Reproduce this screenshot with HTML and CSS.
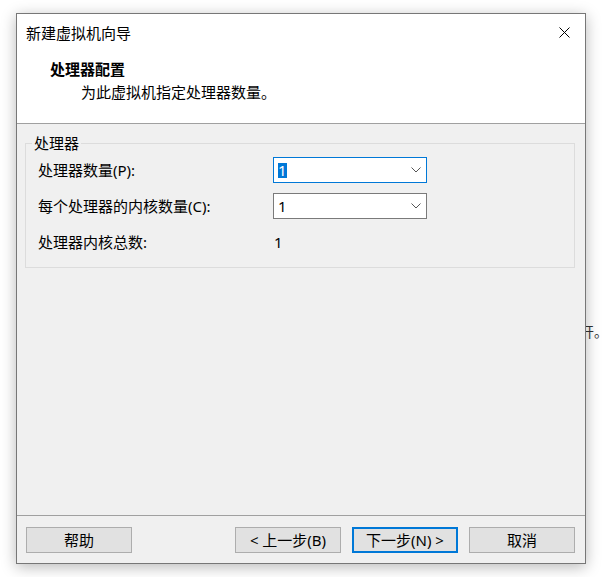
FILE: index.html
```html
<!DOCTYPE html>
<html lang="zh-CN">
<head>
    <meta charset="UTF-8">
    <meta name="viewport" content="width=device-width, initial-scale=1.0">
    <title>新建虚拟机向导</title>
    <link rel="stylesheet" href="styles.css">
</head>
<body>
    <div class="desktop-text">开。</div>

    <div class="window">
        <div class="titlebar">
            <span class="title">新建虚拟机向导</span>
            <svg class="close" width="11" height="11" viewBox="0 0 11 11">
                <path d="M0.5 0.5 L10.5 10.5 M10.5 0.5 L0.5 10.5" stroke="#000" stroke-width="1" fill="none"/>
            </svg>
        </div>

        <div class="header">
            <div class="header-title">处理器配置</div>
            <div class="header-desc">为此虚拟机指定处理器数量。</div>
        </div>

        <div class="content">
            <fieldset class="group">
                <legend>处理器</legend>
                <div class="rows">
                    <label>处理器数量(P):</label>
                    <div class="combo active">
                        <span class="value selected">1</span>
                        <svg width="10" height="6" viewBox="0 0 10 6">
                            <path d="M0.5 0.5 L5 5 L9.5 0.5" stroke="#555" stroke-width="1" fill="none"/>
                        </svg>
                    </div>

                    <label>每个处理器的内核数量(C):</label>
                    <div class="combo">
                        <span class="value">1</span>
                        <svg width="10" height="6" viewBox="0 0 10 6">
                            <path d="M0.5 0.5 L5 5 L9.5 0.5" stroke="#555" stroke-width="1" fill="none"/>
                        </svg>
                    </div>

                    <label>处理器内核总数:</label>
                    <div class="total">1</div>
                </div>
            </fieldset>
        </div>

        <div class="footer">
            <button>帮助</button>
            <div class="spacer"></div>
            <button>&lt; 上一步(B)</button>
            <button class="default">下一步(N) &gt;</button>
            <button>取消</button>
        </div>
    </div>
</body>
</html>
```

FILE: styles.css
```css
body {
    margin: 0;
    padding: 13px 0 0 16px;
    width: 605px;
    height: 577px;
    box-sizing: border-box;
    overflow: hidden;
    position: relative;
    background-color: #fff;
    font-family: "Noto Sans", "Noto Sans CJK SC", sans-serif;
    font-size: 15px;
    color: #000;
}
.desktop-text {
    position: absolute;
    left: 580px;
    top: 322px;
    line-height: 20px;
    font-size: 14px;
    color: #333;
}
.window {
    position: relative;
    z-index: 1;
    width: 570px;
    height: 551px;
    box-sizing: border-box;
    border: 1px solid #777;
    background-color: #f0f0f0;
    display: flex;
    flex-direction: column;
    box-shadow: 0 3px 14px rgba(0,0,0,0.28);
}
.titlebar {
    height: 37px;
    flex-shrink: 0;
    background-color: #fff;
    display: flex;
    align-items: center;
    justify-content: space-between;
    padding-left: 9px;
}
.title {
    line-height: 20px;
}
.close {
    margin-right: 15px;
}
.header {
    height: 73px;
    flex-shrink: 0;
    box-sizing: border-box;
    background-color: #fff;
    padding: 8px 0 0 33px;
    border-bottom: 1px solid #a0a0a0;
}
.header-title {
    font-weight: bold;
    line-height: 20px;
}
.header-desc {
    line-height: 20px;
    margin-top: 3px;
    padding-left: 31px;
}
.content {
    flex: 1;
    padding: 9px 10px 0 8px;
}
.group {
    margin: 0;
    padding: 0 0 12px 0;
    border: 1px solid #dcdcdc;
    min-width: 0;
}
.group legend {
    margin-left: 6px;
    padding: 0 2px;
    line-height: 20px;
}
.rows {
    display: grid;
    grid-template-columns: 235px 154px;
    grid-auto-rows: 26px;
    row-gap: 10px;
    align-items: center;
    padding: 4px 0 0 12px;
}
.rows label {
    line-height: 26px;
}
.combo {
    height: 26px;
    box-sizing: border-box;
    border: 1px solid #7a7a7a;
    background-color: #fff;
    display: flex;
    align-items: center;
    justify-content: space-between;
    padding: 0 5px 0 4px;
}
.combo.active {
    border-color: #0078d7;
}
.value {
    display: inline-block;
    line-height: 15px;
}
.value.selected {
    background-color: #0078d7;
    color: #fff;
}
.total {
    padding-left: 1px;
    line-height: 26px;
}
.footer {
    flex-shrink: 0;
    border-top: 1px solid #a0a0a0;
    padding: 11px 10px 10px 9px;
    display: flex;
    gap: 11px;
}
.spacer {
    flex: 1;
}
button {
    width: 106px;
    height: 26px;
    box-sizing: border-box;
    margin: 0;
    padding: 0;
    border: 1px solid #adadad;
    background-color: #e1e1e1;
    font-family: inherit;
    font-size: 15px;
    line-height: 22px;
    color: #000;
}
button.default {
    border: 2px solid #0078d7;
}
```
